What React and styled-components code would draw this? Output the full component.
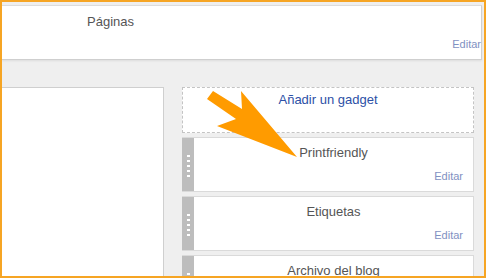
import styled, { createGlobalStyle } from "styled-components";

const GlobalStyle = createGlobalStyle`
  body {
    margin: 0;
    font-family: "Liberation Sans", Arial, sans-serif;
  }
`;

const widgets = [
  { title: "Printfriendly", edit: true },
  { title: "Etiquetas", edit: true },
  { title: "Archivo del blog", edit: false },
];

export default function App() {
  return (
    <Frame>
      <GlobalStyle />
      <TopPanel>
        <PanelTitle>Páginas</PanelTitle>
        <TopEdit>Editar</TopEdit>
      </TopPanel>
      <Body>
        <LeftPanel />
        <Column>
          <AddGadget>Añadir un gadget</AddGadget>
          {widgets.map((w) => (
            <Widget key={w.title}>
              <Handle>
                {[0, 1, 2, 3, 4].map((i) => (
                  <Dot key={i} />
                ))}
              </Handle>
              <WidgetBody>
                <WidgetTitle>{w.title}</WidgetTitle>
                {w.edit && <Edit>Editar</Edit>}
              </WidgetBody>
            </Widget>
          ))}
        </Column>
      </Body>
      {/* offsets are from the frame's padding box (inside the 2px border) */}
      <Arrow viewBox="0 0 95 72" width="95" height="72">
        <polygon
          points="8,3 37,21 36,3 92,69 12,38 31,31 2,11"
          fill="#ff9b00"
        />
      </Arrow>
    </Frame>
  );
}

const Frame = styled.div`
  position: relative;
  box-sizing: border-box;
  width: 486px;
  height: 278px;
  border: 2px solid #f6a524;
  background: #efefef;
  overflow: hidden;
  padding-top: 3px;
  display: flex;
  flex-direction: column;
`;

const TopPanel = styled.div`
  box-sizing: border-box;
  flex-shrink: 0;
  height: 55px;
  margin-right: 2px;
  background: #fff;
  border-top: 1px solid #dcdcdc;
  border-right: 1px solid #d0d0d0;
  border-bottom: 1px solid #cfcfcf;
  box-shadow: 0 1px 2px rgba(0, 0, 0, 0.08);
  display: flex;
  flex-direction: column;
  padding-top: 8px;
`;

const PanelTitle = styled.div`
  width: 217px;
  text-align: center;
  font-size: 13px;
  line-height: 15px;
  color: #555;
`;

const TopEdit = styled.div`
  align-self: flex-end;
  margin-top: 9px;
  font-size: 11px;
  line-height: 13px;
  color: #7f91c2;
`;

const Body = styled.div`
  flex: 1;
  min-height: 0;
  display: flex;
  gap: 18px;
  margin-top: 27px;
`;

const LeftPanel = styled.div`
  width: 161px;
  background: #fff;
  border-top: 1px solid #cfcfcf;
  border-right: 1px solid #cfcfcf;
`;

const Column = styled.div`
  width: 292px;
  display: flex;
  flex-direction: column;
`;

const AddGadget = styled.div`
  box-sizing: border-box;
  flex-shrink: 0;
  height: 46px;
  border: 1px dashed #c4c4c4;
  background: #fff;
  padding-top: 4px;
  text-align: center;
  font-size: 13px;
  line-height: 15px;
  color: #2d50a6;
  margin-bottom: 4px;
`;

const Widget = styled.div`
  box-sizing: border-box;
  height: 55px;
  flex-shrink: 0;
  display: flex;
  margin-bottom: 4px;
  border: 1px solid #dadada;
  border-left: none;
  background: #fff;
`;

const Handle = styled.div`
  width: 12px;
  background: #bdbdbd;
  display: flex;
  flex-direction: column;
  align-items: center;
  gap: 3px;
  padding-top: 17px;
`;

const Dot = styled.span`
  display: block;
  width: 3px;
  height: 2px;
  background: #fff;
`;

const WidgetBody = styled.div`
  flex: 1;
  display: flex;
  flex-direction: column;
  padding: 7px 10px 0 0;
`;

const WidgetTitle = styled.div`
  text-align: center;
  font-size: 13px;
  line-height: 15px;
  color: #555;
  padding-left: 10px;
`;

const Edit = styled.div`
  align-self: flex-end;
  margin-top: 10px;
  font-size: 11px;
  line-height: 13px;
  color: #7f91c2;
`;

const Arrow = styled.svg`
  position: absolute;
  left: 203px;
  top: 86px;
  pointer-events: none;
`;
